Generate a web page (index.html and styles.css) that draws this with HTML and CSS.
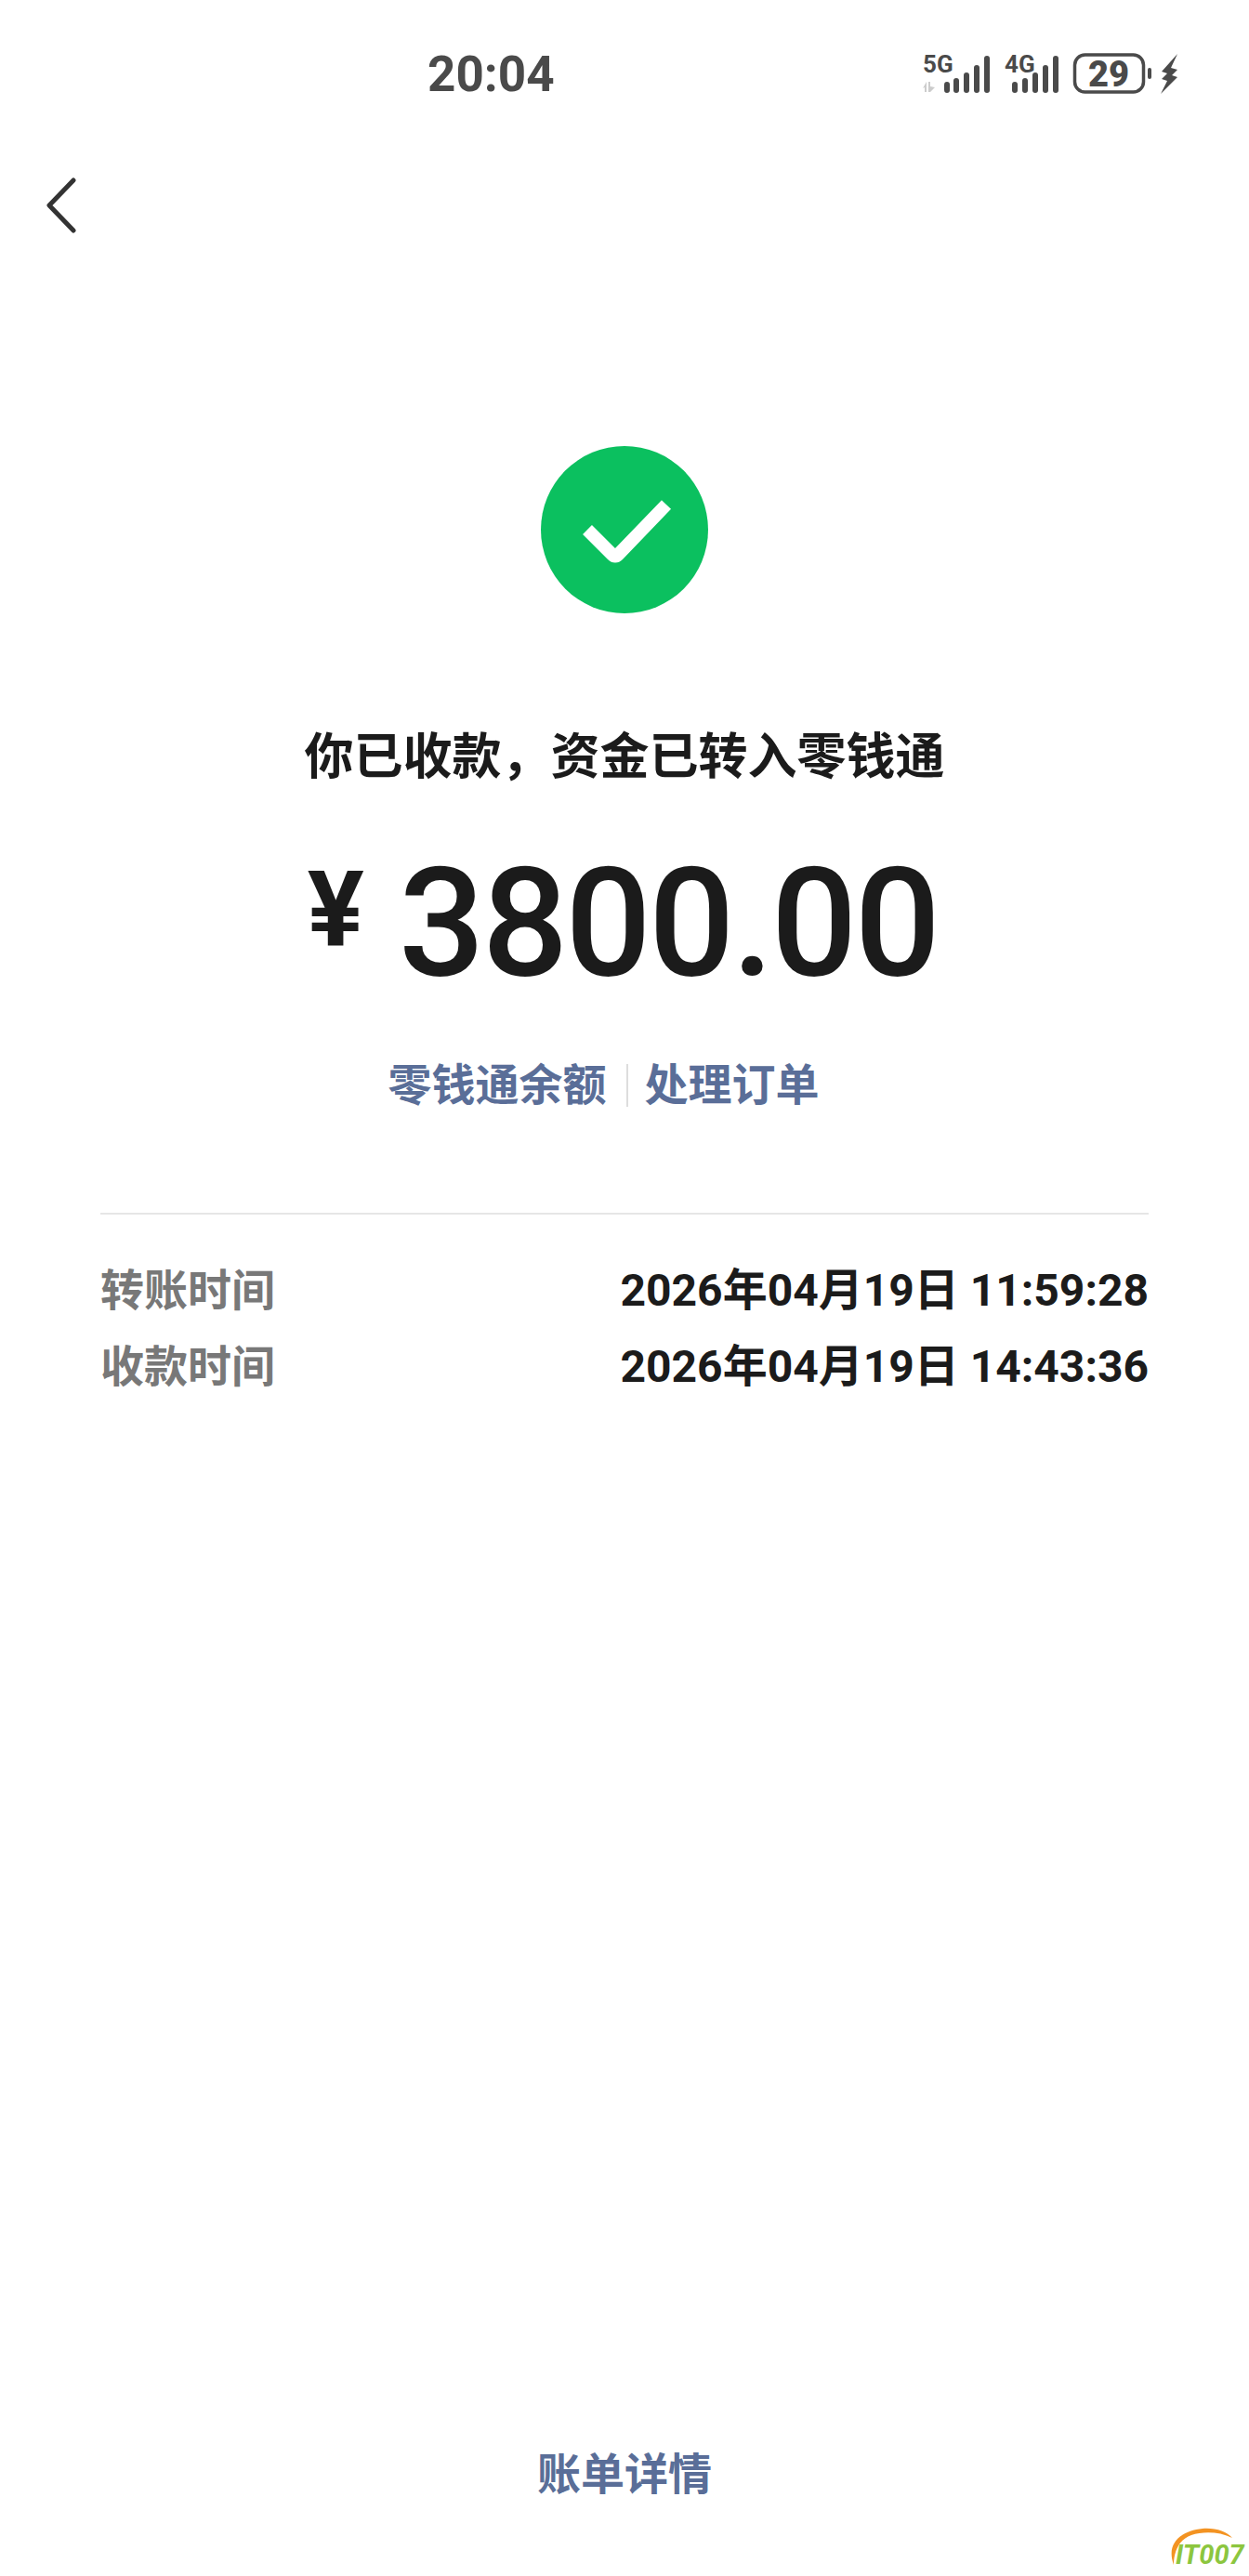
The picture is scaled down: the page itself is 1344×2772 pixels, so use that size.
FILE: index.html
```html
<!DOCTYPE html>
<html lang="zh-CN">
<head>
<meta charset="utf-8">
<title>收款详情</title>
<link rel="stylesheet" href="styles.css">
</head>
<body>
<main class="page">
  <header class="status">
    <span class="clock">20:04</span>
    <svg class="status-icons" width="282" height="50" viewBox="988 54 282 50">
      <g class="net"><text x="993" y="77">5G</text><text x="1081" y="77">4G</text></g>
      <path class="arrows" d="M997 87v11h-2v-5l-2 1zM999 87h2v5l5 1-5 5h-2z"/>
      <g class="bars">
        <rect x="1016" y="87" width="6" height="12" rx="3"/><rect x="1026" y="83" width="6" height="16" rx="3"/><rect x="1037" y="77" width="6" height="22" rx="3"/><rect x="1048" y="69" width="6" height="30" rx="3"/><rect x="1059" y="59" width="6" height="40" rx="3"/>
        <rect x="1089" y="87" width="6" height="12" rx="3"/><rect x="1100" y="83" width="6" height="16" rx="3"/><rect x="1111" y="77" width="6" height="22" rx="3"/><rect x="1122" y="69" width="6" height="30" rx="3"/><rect x="1133" y="59" width="6" height="40" rx="3"/>
      </g>
      <rect class="batt" x="1156.5" y="58" width="74" height="40" rx="11"/>
      <text class="batt-num" x="1193" y="92" text-anchor="middle">29</text>
      <rect class="bars" x="1235" y="72" width="4" height="12" rx="2"/>
      <path class="bars" d="M1267 57 1250 76l6 2-6 6 6 2-7 14 18-18-6-2 6-6-7-2z"/>
    </svg>
  </header>
  <nav class="nav">
    <svg class="back" width="34" height="60" viewBox="0 0 34 60"><path d="M29 3 3 30l26 27"/></svg>
  </nav>
  <section class="hero">
    <svg class="ok" width="180" height="180" viewBox="0 0 180 180">
      <circle cx="90" cy="90" r="90"/>
      <path d="M50 90 77 117q3 3 6 0L135 63" />
    </svg>
    <h1 class="title">你已收款，资金已转入零钱通</h1>
    <div class="amount"><span class="yen">¥</span><span class="sum">3800.00</span></div>
    <div class="links"><a class="link">零钱通余额</a><i class="sep"></i><a class="link">处理订单</a></div>
  </section>
  <section class="rows">
    <div class="row"><span class="key">转账时间</span><span class="val">2026年04月19日 11:59:28</span></div>
    <div class="row"><span class="key">收款时间</span><span class="val">2026年04月19日 14:43:36</span></div>
  </section>
  <footer class="foot"><a class="link">账单详情</a></footer>
  <div class="mark">
    <svg class="arc" width="70" height="40" viewBox="0 0 70 40"><path d="M5 40C-4 16 14 3 36 1c14-1 26 3 32 10C54 4 36 4 24 8 12 12 5 24 5 40z"/></svg>
    <span class="mark-text">IT007</span>
  </div>
</main>
</body>
</html>
```
FILE: styles.css
```css
* { box-sizing: border-box; }
html, body { margin: 0; background: #fff; }
.page {
  position: relative;
  display: flex;
  flex-direction: column;
  height: 2772px;
  overflow: hidden;
  font-family: Roboto, "Noto Sans CJK SC", sans-serif;
  color: #1b1b1b;
}
.status {
  display: flex;
  align-items: center;
  height: 160px;
  padding: 0 74px 0 460px;
  justify-content: space-between;
}
.clock { font-size: 53px; line-height: 60px; font-weight: 700; color: #4a4a4a; }
.status-icons { display: block; }
.net text { font-family: "Liberation Sans Narrow", Roboto, sans-serif; font-size: 26px; font-weight: 700; fill: #4a4a4a; }
.arrows { fill: #ccc; }
.bars { fill: #4a4a4a; }
.batt { fill: none; stroke: #4a4a4a; stroke-width: 3.5; }
.batt-num { font-size: 38px; font-weight: 900; fill: #4a4a4a; }
.nav { height: 320px; padding: 31px 0 0 50px; }
.back { display: block; }
.back path { fill: none; stroke: #333; stroke-width: 5; stroke-linecap: round; stroke-linejoin: round; }
.hero { display: flex; flex-direction: column; align-items: center; }
.ok { display: block; }
.ok circle { fill: #0bc05f; }
.ok path { fill: none; stroke: #fff; stroke-width: 14; }
.title {
  margin: 119px 0 0;
  font-size: 53px;
  line-height: 72px;
  font-weight: 700;
  color: #1b1b1b;
}
.amount { display: flex; align-items: flex-start; margin: 59px 0 0 -4px; height: 160px; }
.yen { font-size: 114px; line-height: 130px; font-weight: 700; margin: 4px 37px 0 0; }
.sum { font-size: 163px; line-height: 160px; font-weight: 500; letter-spacing: -3px; padding-top: 4px; }
.links { display: flex; align-items: center; margin: 68px 45px 0 0; height: 60px; }
.link { font-size: 47px; line-height: 60px; font-weight: 700; color: #5a6e98; }
.sep { width: 2px; height: 46px; background: #ddd; margin: 0 18px 0 21px; }
.rows {
  margin: 107px 108px 0;
  padding-top: 36px;
  border-top: 2px solid #e6e6e6;
}
.row { display: flex; justify-content: space-between; align-items: center; height: 82px; }
.key { font-size: 47px; font-weight: 700; color: #787878; }
.val { font-size: 48px; font-weight: 700; color: #1b1b1b; }
.foot { margin-top: auto; padding-bottom: 79px; text-align: center; }
.mark { position: absolute; left: 1258px; top: 2720px; width: 86px; height: 52px; }
.arc { position: absolute; left: 0; top: 0; }
.arc path { fill: #f39322; }
.mark-text {
  position: absolute;
  left: 7px;
  top: 14px;
  font-size: 29px;
  line-height: 30px;
  font-weight: 700;
  font-style: italic;
  color: #8cc63f;
}
```
